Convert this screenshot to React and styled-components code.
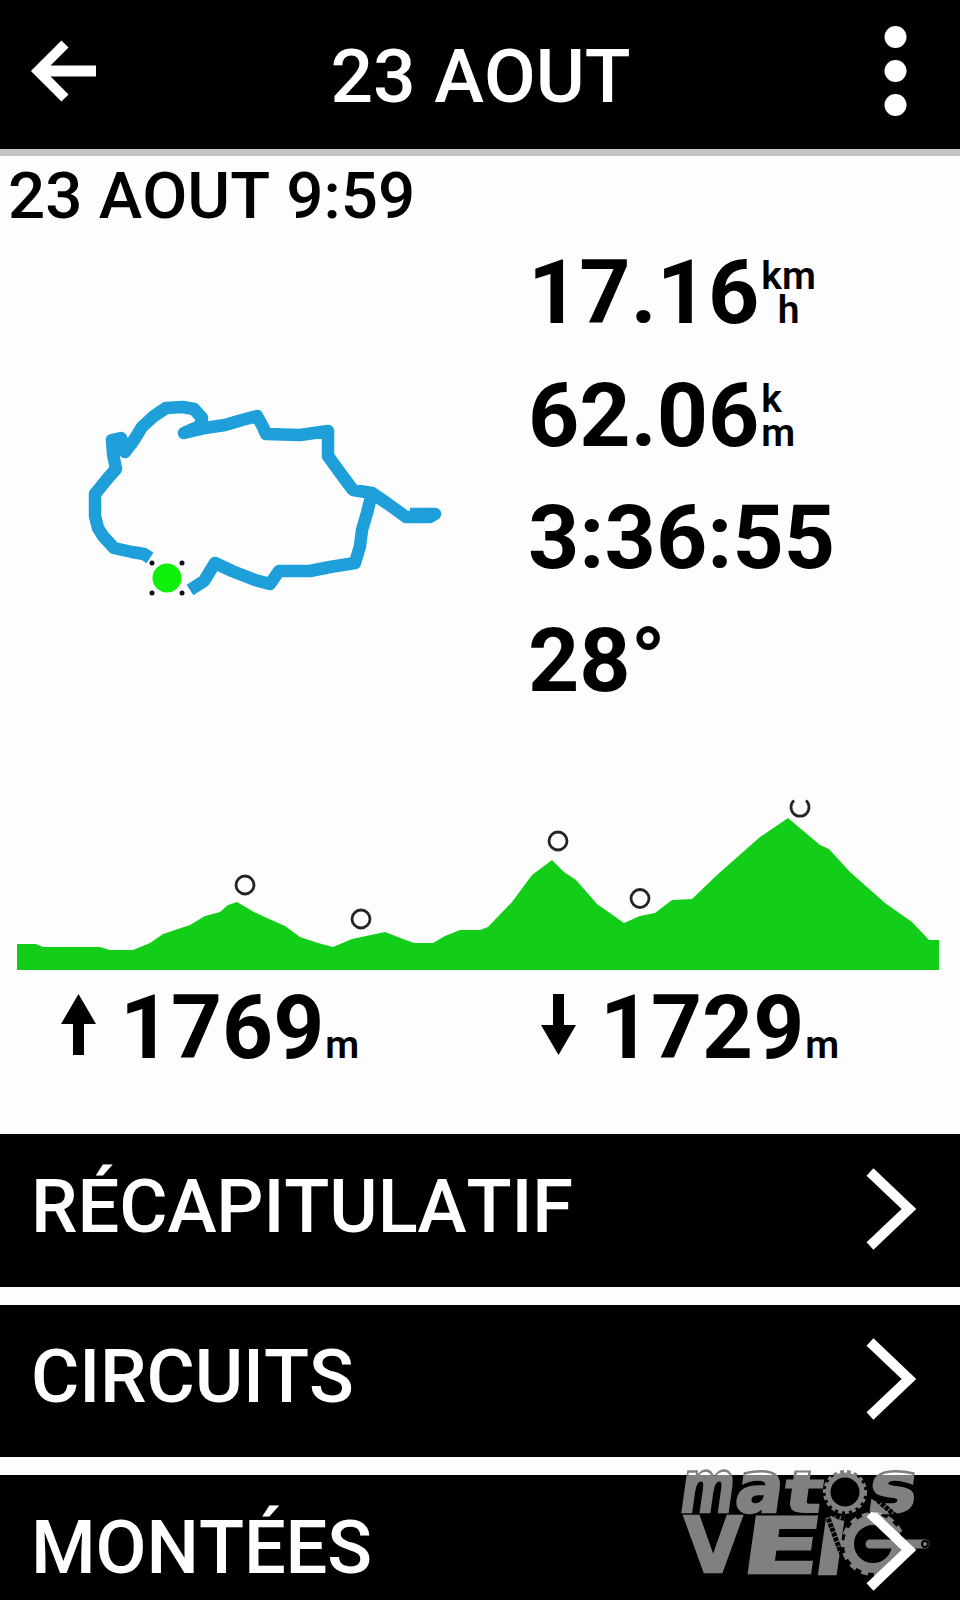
import React from "react";
import styled, { createGlobalStyle } from "styled-components";

const GlobalStyle = createGlobalStyle`
  * {
    box-sizing: border-box;
  }
  body {
    margin: 0;
    background: #fefdfe;
    font-family: Roboto, sans-serif;
    font-kerning: none;
  }
  svg {
    display: block;
    flex-shrink: 0;
  }
`;

const Screen = styled.div`
  width: 960px;
  height: 1600px;
  overflow: hidden;
  position: relative;
  display: flex;
  flex-direction: column;
  background: #fefdfe;
  color: #000;
`;

const Header = styled.header`
  height: 156px;
  flex-shrink: 0;
  display: flex;
  align-items: center;
  justify-content: space-between;
  padding: 0 53px 7px 30px;
  background: #000;
  border-bottom: 7px solid #c6c5c6;
`;

const IconButton = styled.button`
  border: 0;
  padding: 0;
  background: none;
  color: #fff;
`;

const Title = styled.h1`
  margin: 10px 0 0 -21px;
  font-size: 75px;
  line-height: 90px;
  font-weight: 500;
  color: #fff;
`;

const DateLine = styled.p`
  margin: 0;
  padding: 1px 8px 0;
  height: 79px;
  flex-shrink: 0;
  font-size: 65.5px;
  line-height: 77px;
  font-weight: 500;
`;

const Summary = styled.section`
  height: 545px;
  flex-shrink: 0;
  display: flex;
`;

const MapBox = styled.div`
  width: 528px;
  padding: 135px 0 0 70px;
`;

const Stats = styled.div`
  display: flex;
  flex-direction: column;
`;

const Stat = styled.div`
  height: 122.5px;
  display: flex;
  align-items: flex-start;
`;

const Value = styled.span`
  font-size: 89.5px;
  line-height: 116px;
  font-weight: 700;
`;

const Units = styled.span`
  padding: 24px 0 0 2px;
  display: flex;
  flex-direction: column;
  align-items: ${(p) => (p.$center ? "center" : "flex-start")};
  font-size: 39px;
  line-height: 34px;
  font-weight: 600;
`;

const Climb = styled.section`
  display: flex;
  height: 164px;
  flex-shrink: 0;
`;

const ClimbItem = styled.div`
  width: 480px;
  padding-left: 60px;
  display: flex;
  align-items: flex-start;
`;

const ClimbArrow = styled.svg`
  margin: 24px 23px 0 0;
`;

const ClimbValue = styled.span`
  font-size: 89px;
  line-height: 116px;
  font-weight: 700;
`;

const ClimbUnit = styled.span`
  padding-left: 1px;
  font-size: 39px;
  line-height: 151px;
  font-weight: 600;
`;

const Menu = styled.nav`
  display: flex;
  flex-direction: column;
  gap: 18px;
`;

const MenuItem = styled.div`
  height: 152.5px;
  flex-shrink: 0;
  display: flex;
  align-items: center;
  justify-content: space-between;
  padding: 0 44px 3px 31px;
  background: #000;
  color: #fff;
`;

const MenuLabel = styled.span`
  font-size: 74px;
  line-height: 90px;
  font-weight: 500;
  letter-spacing: -0.1px;
  margin-top: -4px;
`;

const Watermark = styled.svg`
  position: absolute;
  left: 675px;
  top: 1460px;
  overflow: visible;
`;

const BackIcon = () => (
  <svg width="68" height="64" viewBox="0 0 68 64" fill="none" stroke="#fff">
    <path d="M66 32H10" strokeWidth="11" />
    <path d="M35 5L8 32l27 27" strokeWidth="10" />
  </svg>
);

const MoreIcon = () => (
  <svg width="23" height="92" viewBox="0 0 23 92" fill="#fff">
    <circle cx="11.5" cy="12" r="11" />
    <circle cx="11.5" cy="46" r="11" />
    <circle cx="11.5" cy="80" r="11" />
  </svg>
);

const Chevron = () => (
  <svg width="51" height="84" viewBox="0 0 51 84" fill="none" stroke="#fff">
    <path d="M5 5L44 42L5 79" strokeWidth="10" />
  </svg>
);

const RouteMap = () => (
  <svg width="400" height="240" viewBox="0 0 400 240">
    <g fill="none" stroke="#1e9fda" strokeWidth="12.5" strokeLinejoin="round">
      <path d="M80 188L74 184L62 182L44 178L33 166L28 158L25 146L25 124L38 108L46 99L43 84L42 70L51 68L55 82L64 70L72 57L84 46L96 38L113 37L124 39L132 48L130 56L114 63L135 58L155 55L172 50L187 46L193 57L196 64L230 65L258 61L258 86L271 104L283 120L302 123L318 134L336 147H360L365 144L340 144" />
      <path d="M302 123L297 143L292 160L290 176L285 193L260 197L240 201L209 201L200 214L185 210L162 201L145 193L134 211L120 220" />
      <path d="M47 69L56 76L64 72" />
    </g>
    <circle cx="97" cy="208" r="14.5" fill="#0ff00a" />
    <g fill="#111">
      <circle cx="82" cy="193" r="2.5" />
      <circle cx="112" cy="193" r="2.5" />
      <circle cx="82" cy="223" r="2.5" />
      <circle cx="112" cy="223" r="2.5" />
    </g>
  </svg>
);

const ElevationChart = () => (
  <svg width="960" height="190" viewBox="0 780 960 190">
    <path
      fill="#12ce18"
      d="M17 944H36L43 947H100L110 950H133L150 943L163 934L190 925L205 916L220 912L228 905L237 902L254 912L267 918L285 926L300 937L318 943L333 947L352 939L385 932L403 939L414 943H433L445 936L460 930H480L488 927L512 902L532 875L552 860L564 872L576 880L597 904L624 923L640 916L655 913L672 900L692 899L717 875L760 837L788 818L820 845L829 849L850 872L885 903L912 922L929 940H939V970H17Z"
    />
    <g fill="#fff" stroke="#292329" strokeWidth="2.8">
      <circle cx="245" cy="885" r="9" />
      <circle cx="361" cy="919" r="9" />
      <circle cx="558" cy="841" r="9" />
      <circle cx="640" cy="898.5" r="9" />
      <path fill="none" d="M794 800.5A9 9 0 1 0 806 800.5" />
    </g>
  </svg>
);

const UpArrow = () => (
  <ClimbArrow width="37" height="62" viewBox="0 0 37 62">
    <path d="M18.500 0L36 30H24V61H13V30H1Z" />
  </ClimbArrow>
);

const DownArrow = () => (
  <ClimbArrow width="37" height="62" viewBox="0 0 37 62">
    <path d="M18.500 61L36 31H24V0H13V31H1Z" />
  </ClimbArrow>
);

const BrandMark = () => (
  <Watermark width="265" height="140" viewBox="0 0 265 140">
    <g
      fill="#fff"
      fillOpacity=".5"
      stroke="#808080"
      strokeWidth="2.5"
      fontFamily="DejaVu Sans"
      fontWeight="700"
    >
      <text transform="translate(3 52) skewX(-8) scale(.7 1)" fontSize="74">m</text>
      <text transform="translate(58 52) skewX(-8) scale(.97 1)" fontSize="73">a</text>
      <text transform="translate(107 52) skewX(-8) scale(1.050 .76)" fontSize="76">t</text>
      <text transform="translate(191 52) skewX(-8) scale(1.120 1)" fontSize="73">s</text>
      <text transform="translate(9 112) scale(.99 1)" fontSize="76">V</text>
      <text transform="translate(64 113) skewX(-8) scale(1.500 1)" fontSize="77">E</text>
      <text transform="translate(137 114) skewX(-8) scale(1.200 1)" fontSize="75">l</text>
    </g>
    <g fill="none" stroke="#000" strokeWidth="5" strokeDasharray="4 1">
      <path d="M149 34L153 58L165 90L177 112L190 120" />
      <path d="M190 25L200 38L222 57" />
      <path d="M153 50Q170 66 191 52" />
    </g>
    <circle cx="170" cy="32" r="14" />
    <g fill="none" stroke="#fff" opacity=".5">
      <circle cx="198" cy="84" r="24" strokeWidth="10" />
      <circle cx="198" cy="84" r="30" strokeWidth="4" strokeDasharray="7 6" />
      <path d="M195 84H250" strokeWidth="9" strokeLinecap="round" />
    </g>
    <g fill="none" stroke="#828282">
      <circle cx="170" cy="32" r="17" strokeWidth="5" />
      <circle cx="170" cy="32" r="20.500" strokeWidth="3" strokeDasharray="4 3" />
    </g>
    <circle cx="250" cy="84" r="3" fill="none" stroke="#000" strokeWidth="2" />
  </Watermark>
);

const menuItems = ["RÉCAPITULATIF", "CIRCUITS", "MONTÉES"];

const App = () => (
  <>
    <GlobalStyle />
    <Screen>
      <Header>
        <IconButton aria-label="Retour">
          <BackIcon />
        </IconButton>
        <Title>23 AOUT</Title>
        <IconButton aria-label="Options">
          <MoreIcon />
        </IconButton>
      </Header>
      <DateLine>23 AOUT 9:59</DateLine>
      <Summary>
        <MapBox>
          <RouteMap />
        </MapBox>
        <Stats>
          <Stat>
            <Value>17.16</Value>
            <Units $center>
              <span>km</span>
              <span>h</span>
            </Units>
          </Stat>
          <Stat>
            <Value>62.06</Value>
            <Units>
              <span>k</span>
              <span>m</span>
            </Units>
          </Stat>
          <Stat>
            <Value>3:36:55</Value>
          </Stat>
          <Stat>
            <Value>28°</Value>
          </Stat>
        </Stats>
      </Summary>
      <ElevationChart />
      <Climb>
        <ClimbItem>
          <UpArrow />
          <ClimbValue>1769</ClimbValue>
          <ClimbUnit>m</ClimbUnit>
        </ClimbItem>
        <ClimbItem>
          <DownArrow />
          <ClimbValue>1729</ClimbValue>
          <ClimbUnit>m</ClimbUnit>
        </ClimbItem>
      </Climb>
      <Menu>
        {menuItems.map((label) => (
          <MenuItem key={label}>
            <MenuLabel>{label}</MenuLabel>
            <Chevron />
          </MenuItem>
        ))}
      </Menu>
      <BrandMark />
    </Screen>
  </>
);

export default App;
